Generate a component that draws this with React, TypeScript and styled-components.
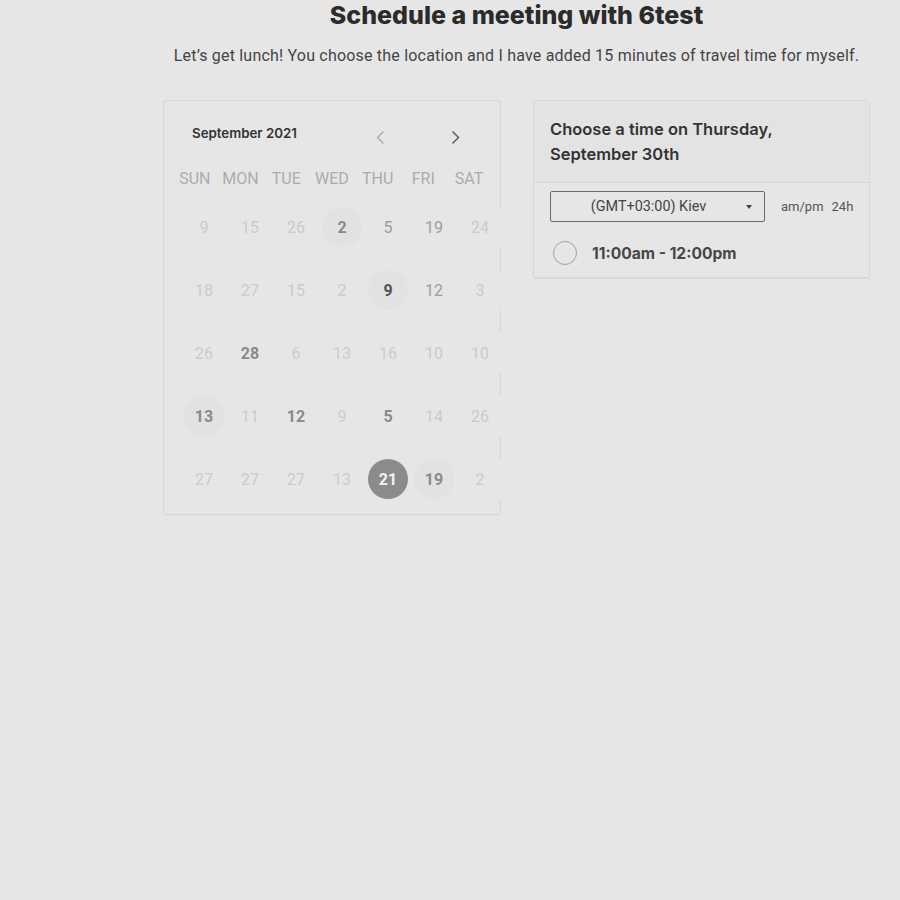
import { FC } from 'react'
import styled, { createGlobalStyle } from 'styled-components'

type Tone = 'faint' | 'muted' | 'strong' | 'dark'

interface Day {
  n: number
  tone: Tone
  ring?: boolean
  selected?: boolean
}

const weekDays = ['SUN', 'MON', 'TUE', 'WED', 'THU', 'FRI', 'SAT']

const f = (n: number): Day => ({ n, tone: 'faint' })
const m = (n: number): Day => ({ n, tone: 'muted' })
const s = (n: number, ring = false): Day => ({ n, tone: 'strong', ring })

const weeks: Day[][] = [
  [f(9), f(15), f(26), s(2, true), m(5), m(19), f(24)],
  [f(18), f(27), f(15), f(2), { n: 9, tone: 'dark', ring: true }, m(12), f(3)],
  [f(26), s(28), f(6), f(13), f(16), f(10), f(10)],
  [s(13, true), f(11), s(12), f(9), s(5), f(14), f(26)],
  [f(27), f(27), f(27), f(13), { n: 21, tone: 'strong', selected: true }, s(19, true), f(2)]
]

const toneColor: Record<Tone, string> = {
  faint: '#cbcbcb',
  muted: '#9d9d9d',
  strong: '#8a8a8a',
  dark: '#555555'
}

const Chevron: FC<{ dir: 'left' | 'right' }> = ({ dir }) => (
  <svg width="10" height="13" viewBox="0 0 10 13" fill="none">
    <polyline
      points={dir === 'left' ? '8,1 2.5,6.5 8,12' : '2,1 7.5,6.5 2,12'}
      stroke="currentColor"
      strokeWidth="1.7"
      strokeLinecap="round"
      strokeLinejoin="round"
    />
  </svg>
)

const App: FC = () => {
  return (
    <>
      <GlobalStyle />
      <Page>
        <Title>Schedule a meeting with 6test</Title>
        <Subtitle>Let’s get lunch! You choose the location and I have added 15 minutes of travel time for myself.</Subtitle>
        <Columns>
          <CalendarCard>
            <CalHeader>
              <MonthLabel>September 2021</MonthLabel>
              <NavButton $muted>
                <Chevron dir="left" />
              </NavButton>
              <NavButton>
                <Chevron dir="right" />
              </NavButton>
            </CalHeader>
            <WeekRow>
              {weekDays.map((d) => (
                <WeekDay key={d}>{d}</WeekDay>
              ))}
            </WeekRow>
            <DayGrid>
              {weeks.flat().map((d, i) => (
                <DayCell key={i}>
                  <DayNumber $tone={d.tone} $ring={d.ring} $selected={d.selected}>
                    {d.n}
                  </DayNumber>
                </DayCell>
              ))}
            </DayGrid>
          </CalendarCard>

          <TimePanel>
            <PanelHeader>
              <PanelTitle>Choose a time on Thursday, September 30th</PanelTitle>
            </PanelHeader>
            <PanelBody>
              <ZoneRow>
                <ZoneSelect>
                  <ZoneText>(GMT+03:00) Kiev</ZoneText>
                  <Caret />
                </ZoneSelect>
                <FormatToggle>
                  <span>am/pm</span>
                  <span>24h</span>
                </FormatToggle>
              </ZoneRow>
              <SlotRow>
                <Radio />
                <SlotLabel>11:00am - 12:00pm</SlotLabel>
              </SlotRow>
            </PanelBody>
          </TimePanel>
        </Columns>
      </Page>
    </>
  )
}

const GlobalStyle = createGlobalStyle`
  html, body {
    margin: 0;
    background: #e6e6e6;
  }
  body {
    font-family: Roboto, 'Liberation Sans', sans-serif;
    min-height: 900px;
  }
`

const Page = styled.div`
  display: flex;
  flex-direction: column;
  width: 707px;
  padding-left: 163px;
`

const Title = styled.h1`
  margin: 0;
  font-family: Inter, 'Noto Sans', sans-serif;
  font-weight: 800;
  font-size: 25px;
  line-height: 30px;
  color: #2b2b2b;
  text-align: center;
`

const Subtitle = styled.p`
  margin: 14px 0 0;
  font-size: 16px;
  letter-spacing: 0.2px;
  line-height: 24px;
  color: #444;
  text-align: center;
  white-space: nowrap;
`

const Columns = styled.div`
  display: flex;
  align-items: flex-start;
  gap: 32px;
  margin-top: 32px;
`

const CalendarCard = styled.div`
  box-sizing: border-box;
  width: 338px;
  height: 415px;
  border: 1px solid #d6d6d6;
  border-radius: 3px;
  background: #e6e6e6;
`

const CalHeader = styled.div`
  display: flex;
  align-items: center;
  height: 20px;
  padding: 22px 29px 0 28px;
`

const MonthLabel = styled.div`
  flex: 1;
  font-family: Inter, 'Noto Sans', sans-serif;
  font-weight: 600;
  font-size: 13.3px;
  color: #333;
`

const NavButton = styled.div<{ $muted?: boolean }>`
  display: flex;
  justify-content: center;
  align-items: center;
  width: 30px;
  height: 20px;
  margin-top: 8px;
  color: ${(p) => (p.$muted ? '#b3b3b3' : '#666')};
  & + & {
    margin-left: 46px;
  }
`

const WeekRow = styled.div`
  display: grid;
  grid-template-columns: repeat(7, 45.7px);
  margin: 26px 0 0 8px;
`

const WeekDay = styled.div`
  text-align: center;
  font-size: 16px;
  line-height: 20px;
  color: #acacac;
`

const DayGrid = styled.div`
  display: grid;
  grid-template-columns: repeat(7, 46px);
  grid-auto-rows: 40px;
  row-gap: 23px;
  width: 322px;
  margin: 18px 0 0 17px;
`

const DayCell = styled.div`
  display: flex;
  justify-content: center;
  align-items: center;
  background: #e6e6e6;
`

const DayNumber = styled.div<{ $tone: Tone; $ring?: boolean; $selected?: boolean }>`
  display: flex;
  justify-content: center;
  align-items: center;
  width: 40px;
  height: 40px;
  border-radius: 50%;
  font-size: 16px;
  font-weight: ${(p) => (p.$tone === 'strong' || p.$tone === 'dark' || p.$selected ? 700 : 400)};
  color: ${(p) => (p.$selected ? '#f4f4f4' : toneColor[p.$tone])};
  background: ${(p) => (p.$selected ? '#8b8b8b' : p.$ring ? '#e2e2e2' : 'transparent')};
`

const TimePanel = styled.div`
  box-sizing: border-box;
  width: 338px;
  border: 1px solid #d8d8d8;
  border-radius: 3px;
  background: #e6e6e6;
  box-shadow: 0 1px 1px rgba(0, 0, 0, 0.06);
`

const PanelHeader = styled.div`
  padding: 16px 16px 15px;
  background: #e3e3e3;
  border-bottom: 1px solid #d6d6d6;
`

const PanelTitle = styled.div`
  max-width: 250px;
  font-family: Inter, 'Noto Sans', sans-serif;
  font-weight: 600;
  font-size: 16.5px;
  line-height: 25px;
  color: #333;
`

const PanelBody = styled.div`
  display: flex;
  flex-direction: column;
  gap: 19px;
  padding: 8px 16px 12px;
`

const ZoneRow = styled.div`
  display: flex;
  align-items: center;
  gap: 16px;
`

const ZoneSelect = styled.div`
  box-sizing: border-box;
  display: flex;
  align-items: center;
  width: 215px;
  height: 31px;
  padding: 0 12px 0 10px;
  border: 1px solid #6a6a6a;
  border-radius: 2px;
`

const ZoneText = styled.span`
  flex: 1;
  padding-right: 10px;
  text-align: center;
  font-size: 14.4px;
  color: #444;
`

const Caret = styled.span`
  width: 0;
  height: 0;
  border-left: 3.5px solid transparent;
  border-right: 3.5px solid transparent;
  border-top: 4px solid #444;
`

const FormatToggle = styled.div`
  display: flex;
  gap: 8px;
  font-size: 13px;
  color: #555;
`

const SlotRow = styled.div`
  display: flex;
  align-items: center;
  gap: 15px;
  padding-left: 3px;
`

const Radio = styled.span`
  box-sizing: border-box;
  width: 24px;
  height: 24px;
  border-radius: 50%;
  border: 1.5px solid #a0a0a0;
`

const SlotLabel = styled.span`
  font-family: Inter, 'Noto Sans', sans-serif;
  font-weight: 700;
  font-size: 15.6px;
  color: #474747;
`

export default App
